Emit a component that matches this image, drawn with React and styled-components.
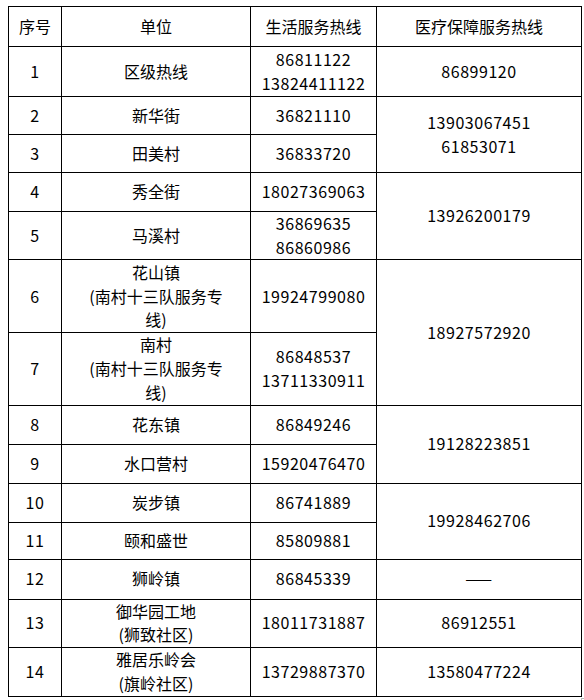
import React from 'react';
import styled, { createGlobalStyle } from 'styled-components';

const GlobalStyle = createGlobalStyle`
  html, body {
    margin: 0;
    padding: 0;
    background: #ffffff;
  }
  body {
    font-family: "Noto Sans CJK SC", "Noto Sans", sans-serif;
    color: #000000;
  }
`;

const Page = styled.div`
  padding: 6px 0 0 8px;
  width: 584px;
  height: 700px;
  box-sizing: border-box;
`;

const Frame = styled.div`
  position: relative;
  width: 573px;

  &::after {
    content: '';
    position: absolute;
    right: -4px;
    bottom: -7px;
    width: 3px;
    height: 5px;
    border-left: 1px solid #b8b8b8;
    border-top: 1px solid #b8b8b8;
  }
`;

const Table = styled.table`
  border-collapse: collapse;
  table-layout: fixed;
  width: 573px;
  font-size: 16px;
  line-height: 23.7px;
`;

const Cell = styled.td`
  border: 1px solid #000000;
  padding: 0;
  text-align: center;
  vertical-align: middle;
  white-space: nowrap;
  height: ${(p) => p.$h - 1}px;
  letter-spacing: ${(p) => (p.$num ? '0.55px' : '0')};
`;

const HeadCell = styled(Cell).attrs({ as: 'th' })`
  font-weight: normal;
`;

const Lines = ({ text }) =>
  text.split('\n').map((t, i, arr) => (
    <React.Fragment key={i}>
      {t}
      {i < arr.length - 1 && <br />}
    </React.Fragment>
  ));

// [no, unit, life hotline, medical hotline (or null when merged above), rowspan, height]
const rows = [
  ['1', '区级热线', '86811122\n13824411122', '86899120', 1, 50],
  ['2', '新华街', '36821110', '13903067451\n61853071', 2, 38],
  ['3', '田美村', '36833720', null, 1, 38],
  ['4', '秀全街', '18027369063', '13926200179', 2, 39],
  ['5', '马溪村', '36869635\n86860986', null, 1, 48],
  ['6', '花山镇\n(南村十三队服务专\n线)', '19924799080', '18927572920', 2, 73],
  ['7', '南村\n(南村十三队服务专\n线)', '86848537\n13711330911', null, 1, 72],
  ['8', '花东镇', '86849246', '19128223851', 2, 39],
  ['9', '水口营村', '15920476470', null, 1, 39],
  ['10', '炭步镇', '86741889', '19928462706', 2, 39],
  ['11', '颐和盛世', '85809881', null, 1, 37],
  ['12', '狮岭镇', '86845339', '——', 1, 40],
  ['13', '御华园工地\n(狮致社区)', '18011731887', '86912551', 1, 47],
  ['14', '雅居乐岭会\n(旗岭社区)', '13729887370', '13580477224', 1, 49],
];

export default function App() {
  return (
    <>
      <GlobalStyle />
      <Page>
        <Frame>
          <Table>
            <colgroup>
              <col style={{ width: 53 }} />
              <col style={{ width: 189 }} />
              <col style={{ width: 126 }} />
              <col style={{ width: 205 }} />
            </colgroup>
            <thead>
              <tr>
                <HeadCell $h={40}>序号</HeadCell>
                <HeadCell $h={40}>单位</HeadCell>
                <HeadCell $h={40}>生活服务热线</HeadCell>
                <HeadCell $h={40}>医疗保障服务热线</HeadCell>
              </tr>
            </thead>
            <tbody>
              {rows.map(([no, unit, life, med, span, h]) => (
                <tr key={no}>
                  <Cell $h={h} $num>{no}</Cell>
                  <Cell $h={h}>
                    <Lines text={unit} />
                  </Cell>
                  <Cell $h={h} $num>
                    <Lines text={life} />
                  </Cell>
                  {med !== null && (
                    <Cell $h={h} rowSpan={span} $num>
                      <Lines text={med} />
                    </Cell>
                  )}
                </tr>
              ))}
            </tbody>
          </Table>
        </Frame>
      </Page>
    </>
  );
}
